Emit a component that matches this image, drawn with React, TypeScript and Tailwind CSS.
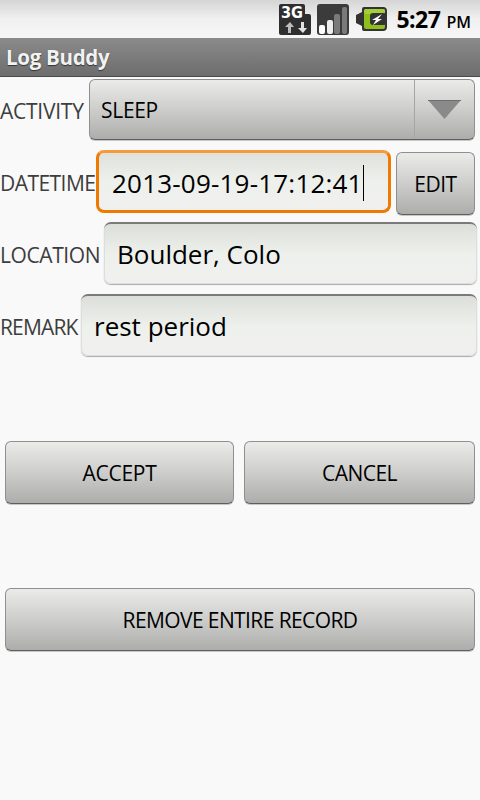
const font = { fontFamily: '"Open Sans", "Noto Sans", sans-serif' };

const btn =
  "flex items-center justify-center rounded-[6px] border border-[#8f8f8f] border-b-[#5f5f5f] bg-gradient-to-b from-[#ebecea] via-[#cdcecc] to-[#adaeac] text-black shadow-[0_1px_0_#c8c8c8]";
const field =
  "flex items-center rounded-[7px] border-t-2 border-t-[#7a7a7a] bg-gradient-to-b from-[#dcdeda] via-[#eef0ec] to-[#f0f1ef] shadow-[0_1px_1px_#aaa,inset_0_0_0_1px_#ddd] text-black";
const label = "text-[#3d3d3d] text-[21px] leading-none whitespace-nowrap";

function StatusIcons() {
  return (
    <div className="flex items-center justify-end pr-[9px]">
      {/* 3G */}
      <svg width="32" height="31" viewBox="0 0 32 31">
        <path d="M2 0h22a2 2 0 0 1 2 2v8h4a2 2 0 0 1 2 2v17a2 2 0 0 1-2 2H2a2 2 0 0 1-2-2V2a2 2 0 0 1 2-2z" fill="#2f2f2f" />
        <text x="2" y="14" fill="#fff" fontSize="15" fontWeight="700" fontFamily="DejaVu Sans" textLength="22" lengthAdjust="spacingAndGlyphs">3G</text>
        <path d="M13 29v-6h-3l5-5 0 0 4 5h-3v6z" fill="#bdbdbd" transform="translate(-4 0)" />
        <path d="M22 18v6h-3l5 5 4-5h-3v-6z" fill="#e2e2e2" />
      </svg>
      {/* signal */}
      <svg width="32" height="31" viewBox="0 0 32 31" className="ml-[6px]">
        <rect width="32" height="31" rx="3" fill="#3b3b3b" />
        <rect x="2" y="21" width="6" height="9" rx="2" fill="#fff" />
        <rect x="10" y="16" width="6" height="14" rx="2" fill="#eee" />
        <rect x="17" y="10" width="6" height="20" rx="2" fill="#7a7a7a" />
        <rect x="25" y="3" width="5" height="27" rx="2" fill="#7a7a7a" />
      </svg>
      {/* battery */}
      <svg width="31" height="24" viewBox="0 0 31 24" className="ml-[7px]">
        <path d="M0 8l6-3V2a2 2 0 0 1 2-2h19a4 4 0 0 1 4 4v16a4 4 0 0 1-4 4H8a2 2 0 0 1-2-2v-3l-6-3z" fill="#333" />
        <rect x="8" y="2" width="21" height="20" rx="2" fill="#8fbf1a" />
        <rect x="8" y="2" width="21" height="5" rx="2" fill="#a5cf3a" />
        <rect x="14" y="6" width="17" height="12" rx="3" fill="#333" />
        <path d="M26 7l-10 6h4l-3 5 9-6h-4z" fill="#fff" />
      </svg>
      <span className="ml-[9px] text-[23px] font-bold leading-none tracking-[-0.5px] text-black">5:27</span>
      <span className="ml-[6px] mt-[5px] text-[16px] font-semibold leading-none text-black">PM</span>
    </div>
  );
}

export default function App() {
  return (
    <div className="flex h-[800px] w-[480px] flex-col overflow-hidden bg-[#f9f9f9]" style={font}>
      <div className="flex h-[38px] items-center justify-end bg-gradient-to-b from-[#d4d5d4] via-[#f0f0f0] to-[#f7f7f7]">
        <StatusIcons />
      </div>
      <div className="flex h-[39px] items-center border-b border-b-[#4a4a4a] bg-gradient-to-b from-[#8a8b8a] to-[#6c6d6c] pl-[6px] text-[20.5px] font-bold tracking-[-0.3px] text-[#f2f2f2] [text-shadow:0_1px_1px_#333]">
        Log Buddy
      </div>

      {/* form rows */}
      <div className="mt-[2px] flex h-[61px] items-center pr-[5px]">
        <span className={`${label} w-[89px] pt-[4px] tracking-[-0.25px]`}>ACTIVITY</span>
        <div className={`${btn} h-[61px] flex-1 !justify-start`}>
          <span className="flex-1 pl-[11px] pt-[2px] text-[21px] tracking-[-0.3px]">SLEEP</span>
          <div className="flex h-full w-[60px] items-center justify-center border-l border-l-[#a5a5a5]">
            <svg width="33" height="19" viewBox="0 0 33 19">
              <path d="M0 0h33L16.5 19z" fill="#8a8a8a" />
              <path d="M0 0h33v1H0z" fill="#6e6e6e" />
            </svg>
          </div>
        </div>
      </div>

      <div className="mt-[10px] flex h-[65px] items-start pr-[5px]">
        <span className={`${label} w-[96px] self-center pt-[2px] tracking-[-0.55px]`}>DATETIME</span>
        <div className="flex h-[63px] w-[295px] items-center rounded-[8px] border-[3px] border-[#f07a00] border-t-[#f79a3c] bg-gradient-to-b from-[#dfe1dd] via-[#eef0ec] to-[#f0f1ef] pl-[13px] pt-[3px] text-[26px] text-black">
          <span className="tracking-[0.2px]">2013-09-19-17:12:41</span>
          <span className="h-[36px] w-px bg-black" />
        </div>
        <div className={`${btn} ml-[5px] mt-[2px] h-[63px] w-[79px] pt-[2px] text-[21px] tracking-[-0.5px]`}>EDIT</div>
      </div>

      <div className="mt-[7px] flex h-[62px] items-center pr-[3px]">
        <span className={`${label} w-[104px] pt-[4px] tracking-[-0.4px]`}>LOCATION</span>
        <div className={`${field} h-[62px] flex-1 pl-[13px] text-[26px]`}>Boulder, Colo</div>
      </div>

      <div className="mt-[10px] flex h-[62px] items-center pr-[3px]">
        <span className={`${label} w-[81px] pt-[4px] tracking-[-0.85px]`}>REMARK</span>
        <div className={`${field} h-[62px] flex-1 pl-[13px] text-[26px]`}>rest period</div>
      </div>

      <div className="mt-[85px] flex gap-[10px] px-[5px]">
        <div className={`${btn} h-[63px] w-[229px] pt-[2px] text-[21px] tracking-[-0.3px]`}>ACCEPT</div>
        <div className={`${btn} h-[63px] flex-1 pt-[2px] text-[21px] tracking-[-0.5px]`}>CANCEL</div>
      </div>

      <div className="mt-[84px] px-[5px]">
        <div className={`${btn} h-[63px] pt-[2px] text-[21px] tracking-[-0.6px]`}>REMOVE ENTIRE RECORD</div>
      </div>
    </div>
  );
}
